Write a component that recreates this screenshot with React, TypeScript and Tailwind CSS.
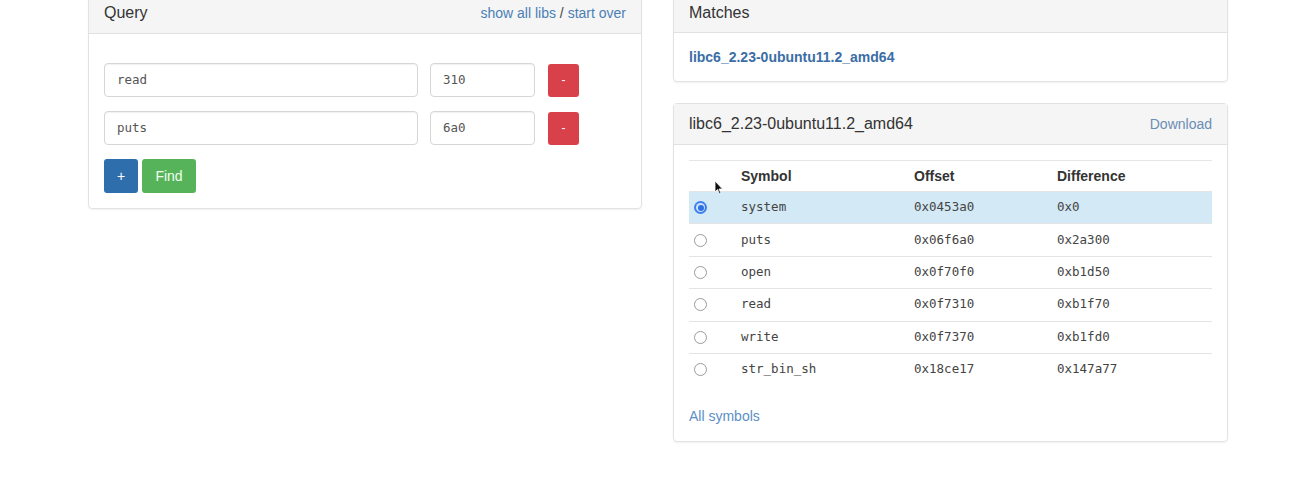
import React from 'react'

type Row = { symbol: string; offset: string; diff: string }

const rows: Row[] = [
  { symbol: 'system', offset: '0x0453a0', diff: '0x0' },
  { symbol: 'puts', offset: '0x06f6a0', diff: '0x2a300' },
  { symbol: 'open', offset: '0x0f70f0', diff: '0xb1d50' },
  { symbol: 'read', offset: '0x0f7310', diff: '0xb1f70' },
  { symbol: 'write', offset: '0x0f7370', diff: '0xb1fd0' },
  { symbol: 'str_bin_sh', offset: '0x18ce17', diff: '0x147a77' },
]

const queries = [
  { name: 'read', addr: '310' },
  { name: 'puts', addr: '6a0' },
]

const sans = "font-['Liberation_Sans',Arial,sans-serif]"
const mono = "font-['DejaVu_Sans_Mono','Liberation_Mono',monospace]"

function Radio({ checked }: { checked?: boolean }) {
  if (checked) {
    return (
      <span className="flex h-[13px] w-[13px] items-center justify-center rounded-full bg-[#3d7ff0]">
        <span className="flex h-[9px] w-[9px] items-center justify-center rounded-full bg-[#cfe3ff]">
          <span className="h-[6px] w-[6px] rounded-full bg-[#2f6fe0]" />
        </span>
      </span>
    )
  }
  return <span className="h-[13px] w-[13px] rounded-full border border-[#9a9a9a] bg-white" />
}

export default function App() {
  return (
    <div className={`min-h-screen bg-white text-[#333] ${sans}`}>
      <div className="ml-[88px] mt-[-8px] flex w-[1140px] items-start gap-[31px]">
        {/* Query */}
        <div className="w-[554px] rounded border border-[#e2e2e2] shadow-[0_1px_2px_rgba(0,0,0,0.06)]">
          <div className="flex h-[41px] items-center justify-between border-b border-[#e2e2e2] bg-[#f5f5f5] px-[15px]">
            <span className="text-[16px]">Query</span>
            <span className="text-[14px] text-[#444]">
              <a className="text-[#4a7fb5]">show all libs</a> / <a className="text-[#4a7fb5]">start over</a>
            </span>
          </div>
          <div className="px-[15px] pb-[15px] pt-[29px]">
            <div className="flex flex-col gap-[14px]">
              {queries.map((q) => (
                <div key={q.name} className="flex items-center">
                  <div className={`flex h-[34px] w-[314px] items-center rounded border border-[#d6d6d6] px-[12px] text-[12.5px] text-[#555] shadow-[inset_0_1px_1px_rgba(0,0,0,0.06)] ${mono}`}>
                    {q.name}
                  </div>
                  <div className={`ml-[12px] flex h-[34px] w-[105px] items-center rounded border border-[#d6d6d6] px-[12px] text-[12.5px] text-[#555] shadow-[inset_0_1px_1px_rgba(0,0,0,0.06)] ${mono}`}>
                    {q.addr}
                  </div>
                  <button className="ml-[13px] flex h-[33px] w-[31px] items-center justify-center rounded-[3px] bg-[#d9414a] text-[12px] text-white">
                    -
                  </button>
                </div>
              ))}
            </div>
            <div className="mt-[14px] flex gap-[4px]">
              <button className="flex h-[34px] w-[34px] items-center justify-center rounded-[3px] bg-[#2f6ead] text-[14px] text-white">
                +
              </button>
              <button className="flex h-[34px] w-[54px] items-center justify-center rounded-[3px] bg-[#56b35a] text-[14px] text-[#f0fff0]">
                Find
              </button>
            </div>
          </div>
        </div>

        {/* Right column */}
        <div className="flex w-[555px] flex-col gap-[21px]">
          <div className="rounded border border-[#e2e2e2] shadow-[0_1px_2px_rgba(0,0,0,0.06)]">
            <div className="flex h-[40px] items-center border-b border-[#e2e2e2] bg-[#f5f5f5] px-[15px] pt-[1px]">
              <span className="text-[16px]">Matches</span>
            </div>
            <div className="flex h-[48px] items-center px-[15px]">
              <a className="text-[14px] font-semibold text-[#3a6ea5]">libc6_2.23-0ubuntu11.2_amd64</a>
            </div>
          </div>

          <div className="relative rounded border border-[#e2e2e2] shadow-[0_1px_2px_rgba(0,0,0,0.06)]">
            <div className="flex h-[41px] items-center justify-between border-b border-[#e2e2e2] bg-[#f5f5f5] px-[15px]">
              <span className="text-[16px]">libc6_2.23-0ubuntu11.2_amd64</span>
              <a className="text-[14px] text-[#6a8db3]">Download</a>
            </div>
            <div className="px-[15px] pb-[14px] pt-[15px]">
              <div className="border-t border-[#e6e6e6]">
                <div className="grid h-[30px] grid-cols-[52px_173px_143px_1fr] items-center text-[14px] font-bold text-[#333]">
                  <span />
                  <span>Symbol</span>
                  <span>Offset</span>
                  <span>Difference</span>
                </div>
                {rows.map((r, i) => (
                  <div
                    key={r.symbol}
                    className={`grid h-[32.4px] grid-cols-[52px_173px_143px_1fr] items-center border-t border-[#e4e4e4] text-[12.5px] text-[#444] ${mono} ${i === 0 ? 'bg-[#d3e9f5]' : ''}`}
                  >
                    <span className="flex pl-[5px]">
                      <Radio checked={i === 0} />
                    </span>
                    <span>{r.symbol}</span>
                    <span>{r.offset}</span>
                    <span>{r.diff}</span>
                  </div>
                ))}
              </div>
              <div className="mt-[21px] text-[14px]">
                <a className="text-[#5b8fc4]">All symbols</a>
              </div>
            </div>

            {/* mouse cursor */}
            <svg className="absolute left-[40px] top-[76px]" width="10" height="15" viewBox="0 0 10 15">
              <path d="M1 1 L1 12 L3.5 9.5 L5.5 14 L7 13.3 L5 9 L8.5 9 Z" fill="#111" stroke="#fff" strokeWidth="0.8" />
            </svg>
          </div>
        </div>
      </div>
    </div>
  )
}
